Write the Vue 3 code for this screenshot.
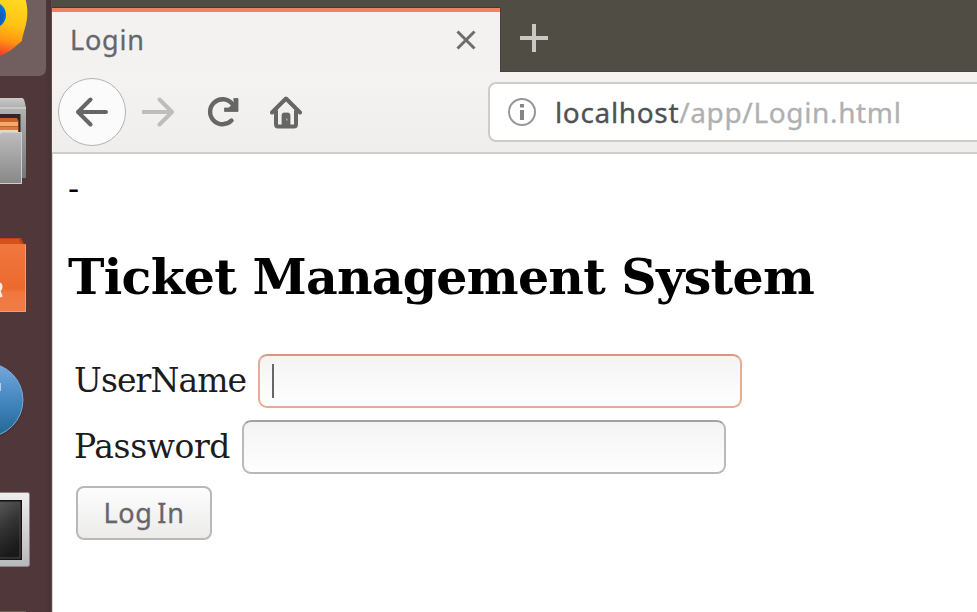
<script setup>
import { ref } from 'vue'

const username = ref('')
const password = ref('')
</script>

<template>
  <div class="desktop">
    <aside class="launcher">
      <svg class="tile first" viewBox="0 0 52 88">
        <defs>
          <linearGradient id="fox" gradientUnits="userSpaceOnUse" x1="22" y1="0" x2="8" y2="56">
            <stop offset="0" stop-color="#ffda20" />
            <stop offset="0.45" stop-color="#ffc315" />
            <stop offset="0.75" stop-color="#ff9412" />
            <stop offset="1" stop-color="#f0402c" />
          </linearGradient>
          <radialGradient id="orb" cx="0.5" cy="0.6" r="0.6">
            <stop offset="0" stop-color="#123f9c" />
            <stop offset="1" stop-color="#0878dc" />
          </radialGradient>
        </defs>
        <path d="M-6 -6H46V68Q46 76 38 76H-6Z" fill="#715f60" />
        <path d="M-6 -6H24C28 6 28.500 16 25 28C23.500 34 22.500 36 22 41C15 46 12 51 0 56H-6Z" fill="url(#fox)" />
        <circle cx="-7" cy="15" r="13" fill="url(#orb)" />
      </svg>

      <svg class="tile" viewBox="0 88 52 132">
        <defs>
          <linearGradient id="cabinet" x1="0" y1="0" x2="0" y2="1">
            <stop offset="0" stop-color="#bdbdbd" />
            <stop offset="1" stop-color="#878787" />
          </linearGradient>
          <linearGradient id="lid" x1="0" y1="0" x2="0" y2="1">
            <stop offset="0" stop-color="#cacaca" />
            <stop offset="0.1" stop-color="#b3b3b3" />
            <stop offset="1" stop-color="#777" />
          </linearGradient>
        </defs>
        <path d="M0 98H22Q24 98 25 103L26 108V178H0Z" fill="url(#lid)" />
        <path d="M0 107H26V109H0Z" fill="#c9c9c9" />
        <path d="M0 114H20.500V133H0Z" fill="#302724" />
        <path d="M0 118H17L18.500 121V133H0Z" fill="#c5622e" />
        <path d="M0 122H18V126H0Z" fill="#f3aa6e" />
        <path d="M0 127H18V131H0Z" fill="#dc7944" />
        <path d="M0 130H18V133H0Z" fill="#f2d5ab" />
        <path d="M0 134L2 132H22V184H0Z" fill="url(#cabinet)" />
        <path d="M0 134L2 132.500H22M21.500 133V183.500H0" fill="none" stroke="#cecece" />
      </svg>

      <svg class="tile" viewBox="0 220 52 132">
        <defs>
          <linearGradient id="bag" x1="0" y1="0" x2="0" y2="1">
            <stop offset="0" stop-color="#f0783f" />
            <stop offset="0.65" stop-color="#ec692e" />
            <stop offset="0.72" stop-color="#f0783e" />
            <stop offset="1" stop-color="#ef7c45" />
          </linearGradient>
        </defs>
        <path d="M0 238H21L24 244V248H0Z" fill="#bd4213" />
        <path d="M0 239H19L21 244H0Z" fill="#d3521d" />
        <path d="M0 244H26V312H0Z" fill="url(#bag)" />
        <path d="M0 311.500H25.500V245" fill="none" stroke="#fa9b6d" />
        <path d="M-1 283.500C2 284 2 289.500 -1 290L1.500 297" fill="none" stroke="#ffe9dd" stroke-width="2.500" />
      </svg>

      <svg class="tile" viewBox="0 352 52 132">
        <defs>
          <linearGradient id="globe" x1="0" y1="0" x2="0" y2="1">
            <stop offset="0" stop-color="#76a9df" />
            <stop offset="0.5" stop-color="#4587bf" />
            <stop offset="1" stop-color="#206694" />
          </linearGradient>
        </defs>
        <circle cx="-14" cy="402" r="38" fill="#3f2c30" opacity=".4" />
        <circle cx="-14" cy="400" r="37" fill="url(#globe)" stroke="#79a9d3" />
        <path d="M0 383V391" stroke="#b5d0ed" stroke-width="2" />
      </svg>

      <svg class="tile last" viewBox="0 484 52 128">
        <defs>
          <linearGradient id="screen" x1="0" y1="0" x2="0.300" y2="1">
            <stop offset="0" stop-color="#595959" />
            <stop offset="0.500" stop-color="#333" />
            <stop offset="1" stop-color="#191919" />
          </linearGradient>
          <linearGradient id="bezel" x1="0" y1="0" x2="0" y2="1">
            <stop offset="0" stop-color="#eee" />
            <stop offset="1" stop-color="#b8b8ba" />
          </linearGradient>
        </defs>
        <path d="M-2 492.500H27.500Q29.500 492.500 29.500 494.500V564.500Q29.500 566.500 27.500 566.500H-2Z" fill="url(#bezel)" stroke="#8b8182" />
        <path d="M-2 500H22V560H-2Z" fill="#141414" />
        <path d="M-2 502H20V558H-2Z" fill="url(#screen)" stroke="#4b4b4b" />
        <path d="M0 611H26V612H0Z" fill="#686158" />
      </svg>
    </aside>

    <main class="browser">
      <header class="tabs">
        <div class="tab">
          <span class="tab-title">Login</span>
          <svg class="close" viewBox="0 0 20 20"><path d="M1.500 1.500L18.500 18.500M18.500 1.500L1.500 18.500" /></svg>
        </div>
        <svg class="plus" viewBox="0 0 28 28"><path d="M14 0V28M0 14H28" /></svg>
      </header>

      <nav class="toolbar">
        <div class="back">
          <svg viewBox="0 0 32 32"><path d="M30 16H2M14.500 3.500L2 16L14.500 28.500" /></svg>
        </div>
        <svg class="forward" viewBox="0 0 32 32"><path d="M1 16H30M17.500 3.500L30 16L17.500 28.500" /></svg>
        <svg class="reload" viewBox="0 0 32 32">
          <path d="M25 7.500A12.500 12.500 0 1 0 24.500 24.500" />
          <path class="solid" d="M27 2.500H31V15.500H17.500V12H21.500L27 7.500Z" />
        </svg>
        <svg class="home" viewBox="0 0 32 34">
          <path d="M2 17.500L16 3.500L30 17.500M6 16V29Q6 31.500 8 31.500H24Q26 31.500 26 29V16" />
          <path class="solid" d="M12 31V20Q12 18 14 18H18Q20 18 20 20V31Z" />
          <path class="knob" d="M16 23.500H17.500V25.500H16Z" />
        </svg>
        <div class="address">
          <svg class="info" viewBox="0 0 28 28">
            <circle cx="14" cy="14" r="13" />
            <path d="M12 6H16V9.500H12ZM12 12H16V22H12Z" />
          </svg>
          <span class="url"><b>localhost</b>/app/Login.html</span>
        </div>
      </nav>

      <section class="page">
        <p class="dash">-</p>
        <h2>Ticket Management System</h2>
        <form @submit.prevent>
          <label class="row"><span class="user-label">UserName</span>
            <span class="field focused"><i class="caret"></i><input v-model="username" type="text" /></span>
          </label>
          <label class="row"><span class="pass-label">Password</span>
            <span class="field"><input v-model="password" type="password" /></span>
          </label>
          <button type="submit"><span>Log In</span></button>
        </form>
      </section>
    </main>
  </div>
</template>

<style>
body {
  overflow: hidden;
}
</style>

<style scoped>
.desktop {
  display: flex;
  width: 977px;
  height: 612px;
  overflow: hidden;
  background: #fff;
}
.launcher {
  display: flex;
  flex: none;
  flex-direction: column;
  box-sizing: border-box;
  width: 52px;
  background: linear-gradient(90deg, #503739 0 88%, #493335);
  border-right: 1px solid #5c4b4c;
}
.tile {
  display: block;
  flex: none;
  width: 52px;
  height: 132px;
}
.first { height: 88px; }
.last { height: 128px; }
.browser {
  flex: 1;
  min-width: 0;
  overflow: hidden;
  box-shadow: inset 1px 0 #d8d1cf;
}
svg { flex: none; }
.tabs {
  display: flex;
  box-sizing: border-box;
  height: 72px;
  padding-top: 8px;
  background: #504d45;
  border-bottom: 1px solid #45413c;
}
.tab {
  display: flex;
  align-items: center;
  box-sizing: border-box;
  width: 448px;
  height: 64px;
  padding: 0 24px 0 18px;
  background: #f3f2f1;
  border-top: 4px solid #ed8360;
  box-shadow: 0 -1px #413b35, 1px 0 #45413c;
}
.tab-title {
  flex: 1;
  color: #66676a;
  font: 27px/36px "Noto Sans", sans-serif;
  letter-spacing: 0.8px;
  padding-bottom: 4px;
  -webkit-text-stroke: 0.3px;
}
.close {
  width: 20px;
  height: 20px;
  margin-bottom: 4px;
  fill: none;
  stroke: #6d6d6d;
  stroke-width: 3;
}
.plus {
  width: 28px;
  height: 28px;
  margin: 16px 0 0 20px;
  fill: none;
  stroke: #cbc8c1;
  stroke-width: 4;
}
.toolbar {
  display: flex;
  align-items: center;
  box-sizing: border-box;
  height: 82px;
  padding-left: 6px;
  background: linear-gradient(#f4f3f2, #efeeec);
  border-bottom: 2px solid #cfcecb;
}
.back {
  display: flex;
  flex: none;
  align-items: center;
  justify-content: center;
  box-sizing: border-box;
  width: 68px;
  height: 68px;
  border: 1.5px solid #b4b3b1;
  border-radius: 50%;
  background: #fcfbfc;
}
.toolbar svg {
  width: 32px;
  height: 32px;
  fill: none;
  stroke: #666;
  stroke-width: 4;
  stroke-linecap: round;
  stroke-linejoin: round;
}
.toolbar .forward {
  margin-left: 16px;
  stroke: #bebdbb;
}
.toolbar .reload {
  margin-left: 33px;
  stroke-width: 4.4;
}
.toolbar .home {
  height: 34px;
  margin-left: 31px;
}
.toolbar .solid {
  fill: #666;
  stroke-width: 0.8;
}
.toolbar .knob {
  fill: #aaa;
  stroke: none;
}
.address {
  display: flex;
  flex: none;
  align-items: center;
  box-sizing: border-box;
  width: 520px;
  height: 60px;
  margin-left: 186px;
  padding-left: 18px;
  border: 2px solid #cdccca;
  border-radius: 8px;
  background: #fff;
}
.toolbar .info {
  width: 28px;
  height: 28px;
  stroke: #979797;
  stroke-width: 2;
}
.info path {
  fill: #858585;
  stroke: none;
}
.url {
  margin-left: 19px;
  color: #b0b0b1;
  font: 28px/36px "Noto Sans", sans-serif;
  letter-spacing: 0.65px;
  white-space: nowrap;
  -webkit-text-stroke: 0.3px;
}
.url b {
  color: #4e5054;
  font-weight: 400;
}
.page {
  padding: 16px 0 0 16px;
  color: #000;
  font: 33px/38px "DejaVu Serif", serif;
}
.dash { margin: 0; }
h2 {
  margin: 38px 0 46px;
  font-size: 49px;
  line-height: 62px;
  letter-spacing: -0.75px;
  white-space: nowrap;
}
form {
  display: flex;
  flex-direction: column;
  align-items: flex-start;
  gap: 12px;
  padding-left: 6px;
}
.row {
  display: flex;
  align-items: center;
  height: 54px;
  color: #1c1c1e;
}
.user-label {
  width: 184px;
  letter-spacing: -0.9px;
}
.pass-label {
  width: 168px;
  letter-spacing: -0.4px;
}
.field {
  display: flex;
  align-items: center;
  box-sizing: border-box;
  width: 484px;
  height: 54px;
  padding-left: 12px;
  border: 2px solid #b9b9b9;
  border-top-color: #a1a1a1;
  border-radius: 9px;
  background: linear-gradient(#f4f4f4, #fefefe);
}
.focused {
  border-color: #e8ac94;
  border-top-color: #d99980;
}
.caret {
  width: 2px;
  height: 34px;
  background: #666;
}
input {
  flex: 1;
  min-width: 0;
  border: 0;
  outline: 0;
  background: transparent;
  font: 28px "Noto Sans", sans-serif;
}
button {
  box-sizing: border-box;
  width: 136px;
  height: 54px;
  margin-left: 2px;
  padding: 0;
  border: 2px solid #b8b8b8;
  border-radius: 8px;
  background: linear-gradient(#fdfdfd, #ecebea);
  color: #65666a;
  font: 27px/46px "Noto Sans", sans-serif;
  letter-spacing: 0.7px;
  word-spacing: -3px;
  -webkit-text-stroke: 0.3px;
}
</style>
